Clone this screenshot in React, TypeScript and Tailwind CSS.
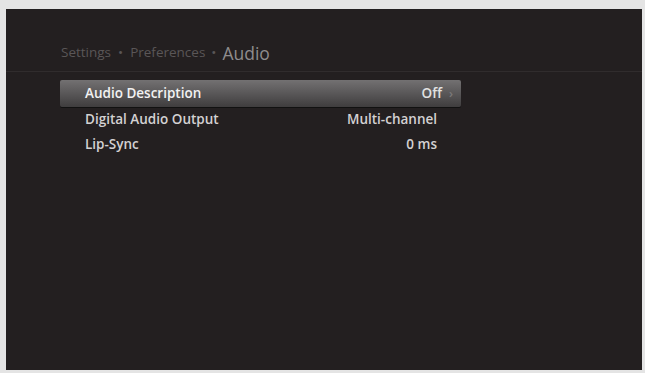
export default function App() {
  const rows = [
    { label: 'Audio Description', value: 'Off', active: true },
    { label: 'Digital Audio Output', value: 'Multi-channel', active: false },
    { label: 'Lip-Sync', value: '0 ms', active: false },
  ];

  return (
    <div className="w-[645px] h-[373px] bg-[#e4e4e4] pl-[6px] pt-[9px] pr-[3px] pb-[3px] font-['Open_Sans',sans-serif]">
      <div className="w-full h-full bg-[#231f20] flex flex-col">
        {/* Breadcrumb */}
        <div className="h-[63px] pl-[55px] flex items-end pb-[9px] border-b border-[#302c2d] text-[13.5px] text-[#5a5657]">
          <span>Settings</span>
          <span className="mx-[7px]">•</span>
          <span>Preferences</span>
          <span className="mx-[6px]">•</span>
          <span className="text-[17.5px] text-[#8f8c8d] leading-[20px] relative top-[1px]">Audio</span>
        </div>

        {/* Menu */}
        <div className="pl-[54px] pt-[8px] w-[455px]">
          {rows.map((r) => (
            <div
              key={r.label}
              className={`h-[25px] flex items-center pl-[25px] pr-[24px] text-[13.5px] font-semibold ${
                r.active
                  ? 'h-[27px] rounded-[2px] bg-gradient-to-b from-[#737172] via-[#595758] to-[#3f3d3e] text-[#f2f2f2] shadow-[0_1px_0_#111]'
                  : 'text-[#d3d1d2]'
              }`}
            >
              <span className="flex-1">{r.label}</span>
              <span className={r.active ? 'text-[#e2e2e2]' : ''}>{r.value}</span>
              {r.active && <span className="ml-[7px] mr-[-16px] text-[#7b797a] text-[12px]">›</span>}
            </div>
          ))}
        </div>
      </div>
    </div>
  );
}
